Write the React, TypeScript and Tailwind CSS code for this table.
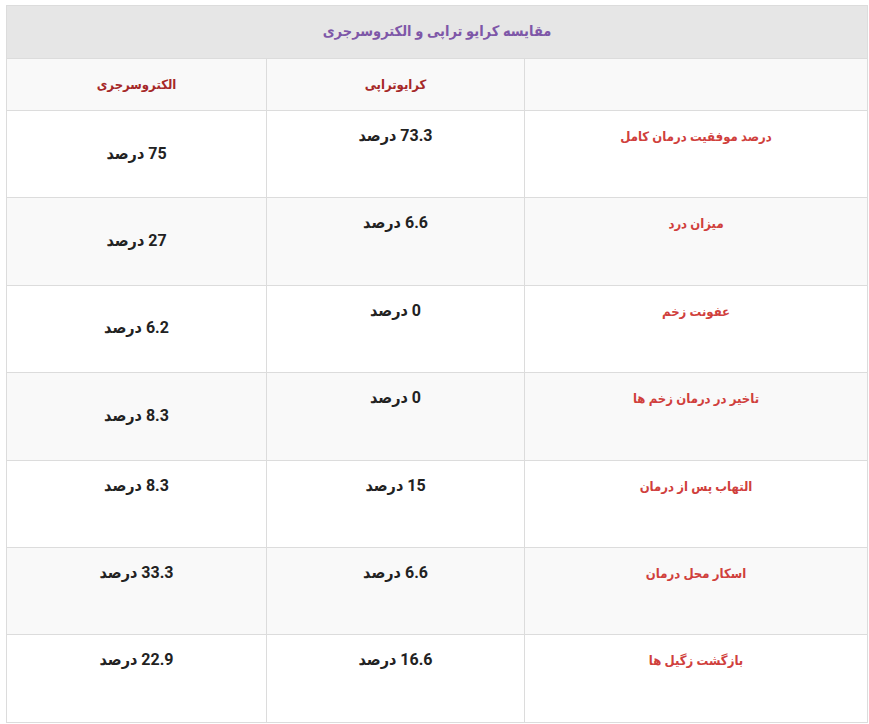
import React from "react";

const rows: { label: string; cryo: string; electro: string; electroMid: boolean }[] = [
  { label: "درصد موفقیت درمان کامل", cryo: "73.3", electro: "75", electroMid: true },
  { label: "میزان درد", cryo: "6.6", electro: "27", electroMid: true },
  { label: "عفونت زخم", cryo: "0", electro: "6.2", electroMid: true },
  { label: "تاخیر در درمان زخم ها", cryo: "0", electro: "8.3", electroMid: true },
  { label: "التهاب پس از درمان", cryo: "15", electro: "8.3", electroMid: false },
  { label: "اسکار محل درمان", cryo: "6.6", electro: "33.3", electroMid: false },
  { label: "بازگشت زگیل ها", cryo: "16.6", electro: "22.9", electroMid: false },
];

function Val({ n }: { n: string }) {
  return (
    <span className="text-[16px] font-bold text-[#222]">
      {n} درصد
    </span>
  );
}

export default function App() {
  return (
    <div
      className="w-[869px] h-[724px] bg-white pt-[5px] pl-[6px]"
      style={{ fontFamily: 'Roboto, "DejaVu Sans Condensed", "DejaVu Sans", sans-serif' }}
    >
      <table dir="rtl" className="w-[861px] border-collapse table-fixed text-[13px] leading-[22px]">
        <colgroup>
          <col className="w-[343px]" />
          <col className="w-[258px]" />
          <col className="w-[260px]" />
        </colgroup>
        <tbody>
          <tr className="h-[53px] bg-[#e6e6e6]">
            <td colSpan={3} className="border border-[#dcdcdc] text-center align-middle text-[#7e57a8] font-bold text-[14.5px]">
              مقایسه کرایو تراپی و الکتروسرجری
            </td>
          </tr>
          <tr className="h-[52px] bg-[#f9f9f9]">
            <td className="border border-[#dcdcdc]"></td>
            <td className="border border-[#dcdcdc] text-center align-middle text-[#a62828] font-bold">کرایوتراپی</td>
            <td className="border border-[#dcdcdc] text-center align-middle text-[#a62828] font-bold">الکتروسرجری</td>
          </tr>
          {rows.map((r, i) => (
            <tr key={i} className={`h-[87.4px] ${i % 2 === 1 ? "bg-[#f9f9f9]" : "bg-white"}`}>
              <td className="border border-[#dcdcdc] text-center align-top pt-[15px] text-[#d0403c] font-bold">
                {r.label}
              </td>
              <td className="border border-[#dcdcdc] text-center align-top pt-[14px]">
                <Val n={r.cryo} />
              </td>
              <td
                className={`border border-[#dcdcdc] text-center ${
                  r.electroMid ? "align-middle" : "align-top pt-[14px]"
                }`}
              >
                <Val n={r.electro} />
              </td>
            </tr>
          ))}
        </tbody>
      </table>
    </div>
  );
}
